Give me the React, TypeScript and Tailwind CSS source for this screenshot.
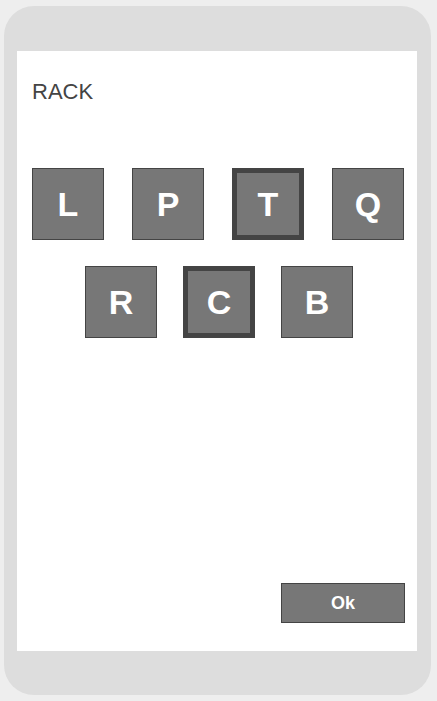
import React from "react";

const rows: { letter: string; selected: boolean }[][] = [
    [
        { letter: "L", selected: false },
        { letter: "P", selected: false },
        { letter: "T", selected: true },
        { letter: "Q", selected: false },
    ],
    [
        { letter: "R", selected: false },
        { letter: "C", selected: true },
        { letter: "B", selected: false },
    ],
];

function Tile({ letter, selected }: { letter: string; selected: boolean }) {
    return (
        <div
            className={`flex items-center justify-center w-[72px] h-[72px] bg-[#777777] text-white font-bold text-[34px] ${
                selected ? "border-[5px] border-[#444444]" : "border border-[#444444]"
            }`}
        >
            {letter}
        </div>
    );
}

export default function App() {
    return (
        <div
            className="min-h-screen bg-[#eeeeee] pt-[6px] pl-[4px]"
            style={{ fontFamily: '"Liberation Sans", Arial, sans-serif' }}
        >
            <div className="w-[427px] h-[689px] rounded-[30px] bg-[#dddddd] pt-[45px] pl-[13px]">
                <div className="w-[400px] h-[600px] bg-white flex flex-col">
                    {/* Header */}
                    <p className="pt-[25px] pl-[15px] text-[22px] leading-8 text-[#444444]">RACK</p>

                    {/* Letter rack */}
                    <div className="mt-[60px] flex flex-col gap-[26px] pl-[2px]">
                        <div className="flex justify-center gap-[28px]">
                            {rows[0].map((t) => (
                                <Tile key={t.letter} letter={t.letter} selected={t.selected} />
                            ))}
                        </div>
                        <div className="flex justify-center gap-[26px] pl-[2px]">
                            {rows[1].map((t) => (
                                <Tile key={t.letter} letter={t.letter} selected={t.selected} />
                            ))}
                        </div>
                    </div>

                    <div className="flex-1" />

                    <div className="flex justify-end pr-[12px] pb-[28px]">
                        <button className="w-[124px] h-[40px] bg-[#777777] border border-[#444444] text-white font-bold text-[18px]">
                            Ok
                        </button>
                    </div>
                </div>
            </div>
        </div>
    );
}
